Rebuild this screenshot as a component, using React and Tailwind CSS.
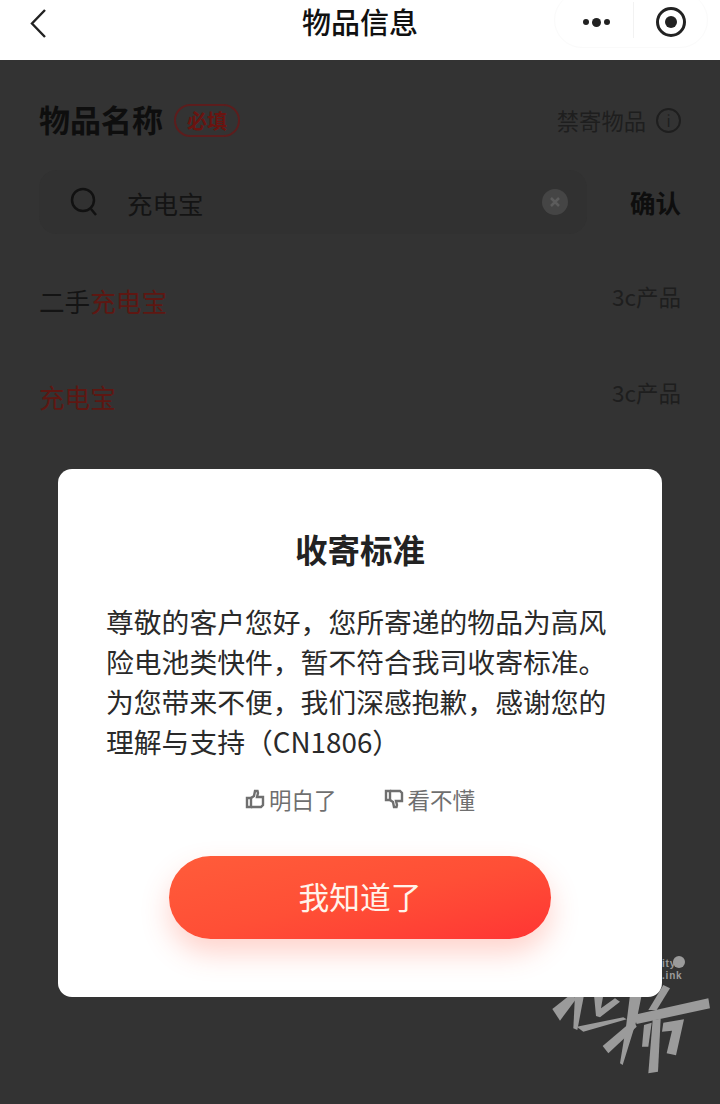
const cjk = "font-['Noto_Sans_CJK_SC','Liberation_Sans',sans-serif]";

function ThumbUp({ down }) {
  return (
    <svg width="20" height="20" viewBox="0 0 20 20" fill="none" stroke="#6f6f6f" strokeWidth="2.4" className={down ? "rotate-180 -scale-x-100" : ""}>
      <path d="M2 9h4v9H2z" />
      <path d="M6 9l3-2 1-5h2.5l.5 2-1 4h6v8l-2 2H6" />
    </svg>
  );
}

function Row({ name, category }) {
  return (
    <div className="flex h-[96px] items-center justify-between px-[39px]">
      <span className="pt-[4px] text-[25.6px] text-[#141414]">{name}</span>
      <span className="pb-[4px] text-[22.5px] text-[#1e1e1e]">{category}</span>
    </div>
  );
}

function App() {
  return (
    <div className={`relative h-[1104px] w-[720px] overflow-hidden bg-[#333333] ${cjk}`}>
      {/* nav bar */}
      <div className="relative flex h-[60px] items-center justify-center bg-white">
        <svg className="absolute top-[8px] left-[28px]" width="22" height="30" viewBox="0 0 22 30" fill="none" stroke="#222" strokeWidth="2.4">
          <path d="M17 2 4 15.5 17 29" />
        </svg>
        <span className="mb-[18px] text-[29px] font-medium leading-none text-[#111]">物品信息</span>
        <div className="absolute top-[-8px] right-[12px] flex h-[56px] w-[154px] items-center rounded-full border border-[#fafafa]">
          <div className="flex w-[78px] items-center justify-center gap-[3px] pl-[4px] pt-[4px]">
            <span className="h-[6px] w-[6px] rounded-full bg-[#222]" />
            <span className="h-[9px] w-[9px] rounded-full bg-[#222]" />
            <span className="h-[6px] w-[6px] rounded-full bg-[#222]" />
          </div>
          <div className="h-[36px] w-px bg-[#f2f2f2]" />
          <div className="flex flex-1 items-center justify-center pt-[4px]">
            <div className="flex h-[30px] w-[30px] items-center justify-center rounded-full border-[3px] border-[#222]">
              <span className="h-[12px] w-[12px] rounded-full bg-[#222]" />
            </div>
          </div>
        </div>
      </div>

      {/* dimmed page */}
      <div className="flex h-[99px] items-center justify-between px-[39px] pt-[22px]">
        <div className="flex items-center gap-[11px]">
          <span className="pb-[4px] text-[31px] font-bold leading-none text-[#0e0e0e]">物品名称</span>
          <span className="flex h-[33px] w-[66px] items-center justify-center rounded-full border-2 border-[#5c1d1d] text-[20px] font-bold leading-none text-[#6a1410]">必填</span>
        </div>
        <div className="flex items-center gap-[10px]">
          <span className="text-[22.3px] text-[#1e1e1e]">禁寄物品</span>
          <div className="flex h-[25px] w-[25px] items-center justify-center rounded-full border-2 border-[#1e1e1e] text-[15px] leading-none text-[#1e1e1e]">i</div>
        </div>
      </div>

      <div className="flex items-center justify-between px-[39px] pt-[11px]">
        <div className="flex h-[64px] w-[548px] items-center rounded-[18px] bg-[#313131] pl-[31px]">
          <svg width="28" height="30" viewBox="0 0 28 30" fill="none" stroke="#111" strokeWidth="2.5">
            <circle cx="13" cy="13" r="11" />
            <path d="m21 22 5 6" />
          </svg>
          <span className="ml-[29px] flex-1 pt-[2px] text-[25.5px] text-[#141414]">充电宝</span>
          <div className="mr-[19px] flex h-[26px] w-[26px] items-center justify-center rounded-full bg-[#454545]">
            <svg width="12" height="12" viewBox="0 0 12 12" stroke="#5c5c5c" strokeWidth="2.5">
              <path d="m2 2 8 8M10 2l-8 8" />
            </svg>
          </div>
        </div>
        <span className="text-[25.5px] font-bold text-[#0e0e0e]">确认</span>
      </div>

      <div className="pt-[17px]">
        <Row name={<>二手<span className="text-[#5e1712]">充电宝</span></>} category="3c产品" />
        <Row name={<span className="text-[#5e1712]">充电宝</span>} category="3c产品" />
      </div>

      {/* watermark logo */}
      <div className="absolute top-[930px] left-[520px] h-[160px] w-[200px]">
        <span className="absolute top-[28px] left-[142px] font-['Liberation_Sans',sans-serif] text-[10px] font-bold leading-[12px] tracking-[0.8px] text-[#9b9b9b]">
          ity<br />.ink
        </span>
        <span className="absolute top-[26px] left-[153px] h-[12px] w-[12px] rounded-full bg-[#9b9b9b]" />
        <svg className="absolute inset-0" width="200" height="160" viewBox="0 0 600 480" fill="#9b9b9b">
          <path d="M97 237 150 195 170 205 120 272z" />
          <path d="M165 195 192 195 172 300 160 295z" />
          <path d="M170 290 310 262 320 268 190 305z" />
          <path d="M222 195 250 195 243 235 285 205 300 215 240 262 228 258z" />
          <path d="M340 255 565 205 570 235 350 282z" />
          <path d="M330 195 365 195 350 270 308 405 300 400 318 290z" />
          <path d="M248 348 340 270 350 290 265 370z" />
          <path d="M430 165 450 175 410 240 385 240z" />
          <path d="M372 285 395 278 385 350 366 350z" />
          <path d="M430 278 492 268 468 376 440 370 456 302 426 305z" />
          <path d="M398 270 422 266 414 425 385 430z" />
        </svg>
      </div>

      {/* dialog */}
      <div className="absolute top-[469px] left-[58px] flex h-[528px] w-[604px] flex-col items-center rounded-[14px] bg-white">
        <h2 className="pt-[60px] text-[32.5px] font-bold leading-[40px] text-[#222]">收寄标准</h2>
        <p className="w-[508px] pt-[32px] text-[27.8px] leading-[40px] text-[#2a2a2a]">
          尊敬的客户您好，您所寄递的物品为高风险电池类快件，暂不符合我司收寄标准。为您带来不便，我们深感抱歉，感谢您的理解与支持（CN1806）
        </p>
        <div className="flex items-center gap-[47px] pt-[18px] text-[22.5px] leading-[40px] text-[#6f6f6f]">
          <div className="flex items-center gap-[4px]"><ThumbUp />明白了</div>
          <div className="flex items-center gap-[4px]"><ThumbUp down />看不懂</div>
        </div>
        <button className="mt-[37px] h-[83px] w-[382px] rounded-full bg-gradient-to-br from-[#ff5c3a] via-[#ff4f36] to-[#ff3434] pb-[3px] text-[30.7px] text-[#fff3ea] shadow-[0_14px_28px_rgba(255,80,50,0.25)]">
          我知道了
        </button>
      </div>
    </div>
  );
}

export default App;
